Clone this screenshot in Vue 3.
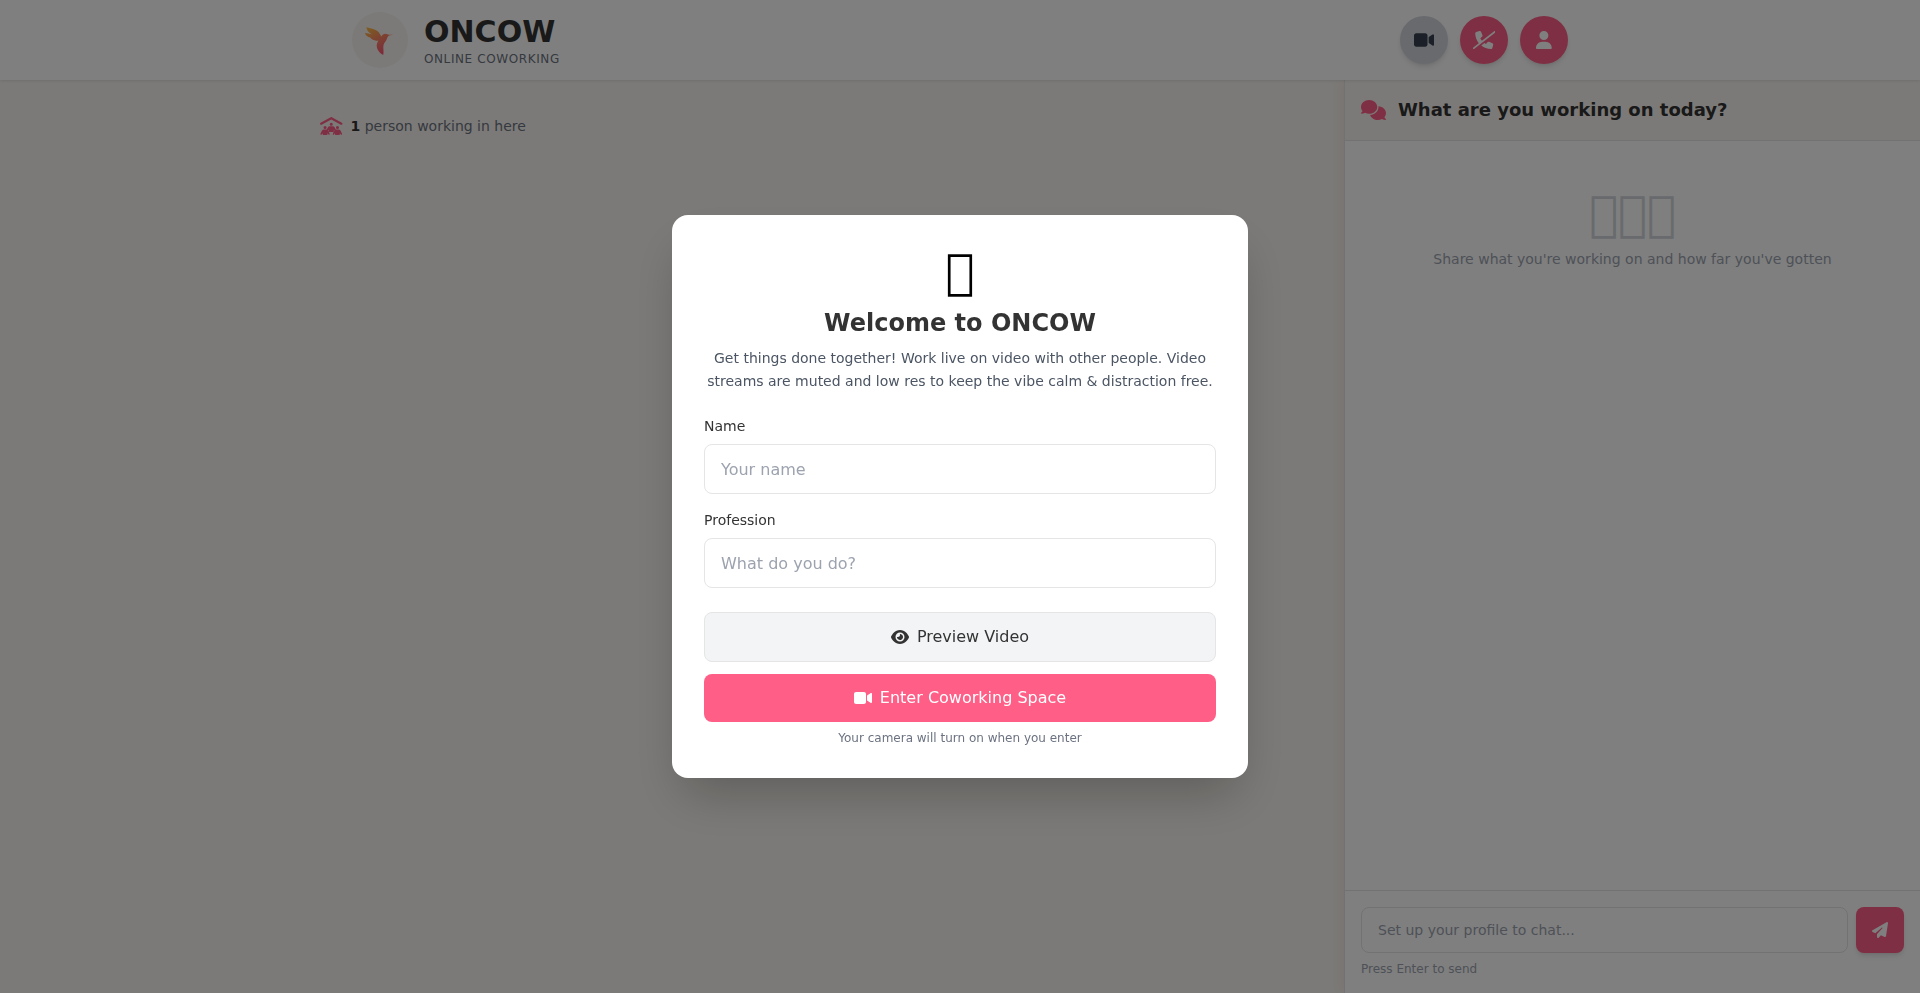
<script setup>
import { ref } from 'vue'

const name = ref('')
const profession = ref('')
const message = ref('')

// Private-use code point, drawn as a plain empty box
const box = String.fromCodePoint(0xf0000)

const icons = {
  video: { box: '0 0 576 512', d: 'M0 128C0 92.7 28.7 64 64 64H320c35.3 0 64 28.7 64 64V384c0 35.3-28.7 64-64 64H64c-35.3 0-64-28.7-64-64V128zM559.1 99.8c10.4 5.6 16.9 16.4 16.9 28.2V384c0 11.8-6.5 22.6-16.9 28.2s-23 5-32.9-1.6l-96-64L416 337.1V320 192 174.9l14.2-9.5 96-64c9.8-6.5 22.4-7.2 32.9-1.6z' },
  phoneSlash: { box: '0 0 640 512', d: 'M228.9 24.6c-7.7-18.6-28-28.5-47.4-23.2l-88 24C76.1 30.2 64 46 64 64c0 107.4 37.8 206 100.8 283.1L9.2 469.1c-10.4 8.2-12.3 23.3-4.1 33.7s23.3 12.3 33.7 4.1l592-464c10.4-8.2 12.3-23.3 4.1-33.7s-23.3-12.3-33.7-4.1L253 278c-17.8-21.5-32.9-45.2-45-70.7L257.3 167c13.7-11.2 18.4-30 11.6-46.3l-40-96zm96.8 319l-91.3 72C310.7 476 407.1 512 512 512c18 0 33.8-12.1 38.6-29.5l24-88c5.3-19.4-4.6-39.7-23.2-47.4l-96-40c-16.3-6.8-35.2-2.1-46.3 11.6L368.7 368c-15-7.1-29.3-15.2-43-24.3z' },
  user: { box: '0 0 448 512', d: 'M224 256A128 128 0 1 0 224 0a128 128 0 1 0 0 256zm-45.7 48C79.8 304 0 383.8 0 482.3C0 498.7 13.3 512 29.7 512H418.3c16.4 0 29.7-13.3 29.7-29.7C448 383.8 368.2 304 269.7 304H178.3z' },
  comments: { box: '0 0 640 512', d: 'M208 352c114.9 0 208-78.8 208-176S322.9 0 208 0S0 78.8 0 176c0 38.6 14.7 74.3 39.6 103.4c-3.5 9.4-8.7 17.7-14.2 24.7c-4.8 6.2-9.7 11-13.3 14.3c-1.8 1.6-3.3 2.9-4.3 3.7c-.5 .4-.9 .7-1.1 .8l-.2 .2C1 327.2-1.4 334.4 .8 340.9S9.1 352 16 352c21.8 0 43.8-5.6 62.1-12.5c9.2-3.5 17.8-7.4 25.3-11.4C134.1 343.3 169.8 352 208 352zM448 176c0 112.3-99.1 196.9-216.5 207C255.8 457.4 336.4 512 432 512c38.2 0 73.9-8.7 104.7-23.9c7.5 4 16 7.9 25.2 11.4c18.3 6.9 40.3 12.5 62.1 12.5c6.9 0 13.1-4.5 15.2-11.1c2.1-6.6-.2-13.8-5.8-17.9l-.2-.2c-.2-.2-.6-.4-1.1-.8c-1-.8-2.5-2-4.3-3.7c-3.6-3.3-8.5-8.1-13.3-14.3c-5.5-7-10.7-15.4-14.2-24.7c24.9-29 39.6-64.7 39.6-103.4c0-92.8-84.9-168.9-192.6-175.5c.4 5.1 .6 10.3 .6 15.5z' },
  plane: { box: '0 0 512 512', d: 'M498.1 5.6c10.1 7 15.4 19.1 13.5 31.2l-64 416c-1.5 9.7-7.4 18.2-16 23s-18.9 5.4-28 1.6L284 427.7l-68.5 74.1c-8.9 9.7-22.9 12.9-35.2 8.1S160 493.2 160 480V396.4c0-4 1.5-7.8 4.2-10.7L331.8 202.8c5.8-6.3 5.6-16-.4-22s-15.7-6.4-22-.7L106 360.8 17.7 316.6C7.1 311.3 .3 300.7 0 288.9s5.9-22.8 16.1-28.7l448-256c10.7-6.1 23.9-5.5 34 1.4z' },
  eye: { box: '0 0 576 512', d: 'M288 32c-80.8 0-145.5 36.8-192.6 80.6C48.6 156 17.3 208 2.5 243.7c-3.3 7.9-3.3 16.7 0 24.6C17.3 304 48.6 356 95.4 399.4C142.5 443.2 207.2 480 288 480s145.5-36.8 192.6-80.6c46.8-43.5 78.1-95.4 93-131.1c3.3-7.9 3.3-16.7 0-24.6c-14.9-35.7-46.2-87.7-93-131.1C433.5 68.8 368.8 32 288 32zM144 256a144 144 0 1 1 288 0 144 144 0 1 1 -288 0zm144-64c0 35.3-28.7 64-64 64c-7.1 0-13.9-1.2-20.3-3.3c-5.5-1.8-11.9 1.6-11.7 7.4c.3 6.9 1.3 13.8 3.2 20.7c13.7 51.2 66.4 81.6 117.6 67.9s81.6-66.4 67.9-117.6c-11.1-41.5-47.8-69.4-88.6-71.1c-5.8-.2-9.2 6.1-7.4 11.7c2.1 6.4 3.3 13.2 3.3 20.3z' },
  peopleRoof: { box: '0 0 640 512', d: 'M335.5 4l288 160c15.4 8.6 21 28.1 12.4 43.5s-28.1 21-43.5 12.4L320 68.6 47.5 220c-15.4 8.6-34.9 3-43.5-12.4s-3-34.9 12.4-43.5L304.5 4c9.7-5.4 21.4-5.4 31.1 0zM320 160a44 44 0 1 1 0 88 44 44 0 1 1 0-88zM144 256a44 44 0 1 1 0 88 44 44 0 1 1 0-88zM496 256a44 44 0 1 1 0 88 44 44 0 1 1 0-88zM284 262h72c27 0 50 14 63 37l40 76c7 14 2 28-9 33s-25 1-32-10l-24-42v50c0 12-8 20-20 20H266c-12 0-20-8-20-20v-50l-24 42c-7 11-21 15-32 10s-16-19-9-33l40-76c13-23 36-37 63-37zM112 358h64c27 0 46 12 59 35l38 76c7 14 2 28-9 33s-25 1-32-10l-18-34v34c0 12-8 20-20 20H94c-12 0-20-8-20-20v-34l-18 34c-7 11-21 15-32 10s-16-19-9-33l38-76c13-23 32-35 59-35zM464 358h64c27 0 46 12 59 35l38 76c7 14 2 28-9 33s-25 1-32-10l-18-34v34c0 12-8 20-20 20H446c-12 0-20-8-20-20v-34l-18 34c-7 11-21 15-32 10s-16-19-9-33l38-76c13-23 32-35 59-35z' }
}
</script>

<template>
  <div class="page">
    <header class="topbar">
      <div class="topbar-inner">
        <div class="brand">
          <span class="logo">
            <svg viewBox="0 0 56 56" aria-hidden="true">
              <defs>
                <linearGradient id="bird" x1="15" y1="14" x2="31" y2="43" gradientUnits="userSpaceOnUse">
                  <stop offset="0" stop-color="#fbc03f" />
                  <stop offset="0.5" stop-color="#fb8562" />
                  <stop offset="1" stop-color="#fb5078" />
                </linearGradient>
              </defs>
              <path fill="url(#bird)" d="M14.5 14.9C16.4 16 22.2 16.6 25.4 19C27.4 20.6 28.4 22.6 29.2 24.6C30 22.8 31.8 21.6 33.6 21.7C35 21.8 35.8 22.3 36.8 22.7L41.4 22.8L37 23.6C35.8 24.4 35.2 26 34.6 27.6C33.8 29.6 32 31 31.5 33.2C30.8 36.2 32.2 39.4 31.2 42.9C28 41.4 24.8 38 24.7 33.8C24.6 31.6 25.6 30 26.4 28.4C22.8 29.2 20 28 18.2 25.6C16 25 13.4 23.6 13 20.7C15.2 21.6 18 21.4 20.4 22.6C17.6 20.8 14.6 18.8 14.5 14.9Z" />
            </svg>
          </span>
          <div>
            <h1>ONCOW</h1>
            <p class="tagline">Online Coworking</p>
          </div>
        </div>
        <nav class="actions" aria-label="Session">
          <button class="round muted" type="button" aria-label="Toggle camera">
            <svg class="i18" :viewBox="icons.video.box"><path :d="icons.video.d" /></svg>
          </button>
          <button class="round" type="button" aria-label="Leave">
            <svg class="i18" :viewBox="icons.phoneSlash.box"><path :d="icons.phoneSlash.d" /></svg>
          </button>
          <button class="round" type="button" aria-label="Profile">
            <svg class="i18" :viewBox="icons.user.box"><path :d="icons.user.d" /></svg>
          </button>
        </nav>
      </div>
    </header>

    <div class="columns">
      <main class="space">
        <p class="count">
          <svg class="i18 pink" :viewBox="icons.peopleRoof.box"><path :d="icons.peopleRoof.d" /></svg>
          <span><strong>1</strong> person working in here</span>
        </p>
      </main>

      <aside class="chat">
        <div class="chat-head">
          <svg class="i20 pink" :viewBox="icons.comments.box"><path :d="icons.comments.d" /></svg>
          <h2>What are you working on today?</h2>
        </div>
        <div class="chat-empty">
          <p class="glyphs" aria-hidden="true">{{ box.repeat(3) }}</p>
          <p>Share what you're working on and how far you've gotten</p>
        </div>
        <form class="chat-form" @submit.prevent>
          <div class="chat-row">
            <input v-model="message" type="text" aria-label="Message" placeholder="Set up your profile to chat..." />
            <button type="submit" class="send" aria-label="Send">
              <svg class="i16" :viewBox="icons.plane.box"><path :d="icons.plane.d" /></svg>
            </button>
          </div>
          <p class="hint">Press Enter to send</p>
        </form>
      </aside>
    </div>

    <div class="overlay">
      <form class="modal" role="dialog" aria-labelledby="welcome" @submit.prevent>
        <p class="wave" aria-hidden="true">{{ box }}</p>
        <h2 id="welcome">Welcome to ONCOW</h2>
        <p class="intro">Get things done together! Work live on video with other people. Video streams are muted and low res to keep the vibe calm &amp; distraction free.</p>
        <div class="fields">
          <div class="field">
            <label for="name">Name</label>
            <input id="name" v-model="name" type="text" placeholder="Your name" />
          </div>
          <div class="field">
            <label for="profession">Profession</label>
            <input id="profession" v-model="profession" type="text" placeholder="What do you do?" />
          </div>
        </div>
        <div class="buttons">
          <button type="button" class="preview">
            <svg class="i16" :viewBox="icons.eye.box"><path :d="icons.eye.d" /></svg>
            Preview Video
          </button>
          <button type="submit" class="enter">
            <svg class="i16" :viewBox="icons.video.box"><path :d="icons.video.d" /></svg>
            Enter Coworking Space
          </button>
        </div>
        <p class="note">Your camera will turn on when you enter</p>
      </form>
    </div>
  </div>
</template>

<style>
body {
  margin: 0;
  background: #f9f5f0;
}
</style>

<style scoped>
.page {
  min-height: 100vh;
  display: flex;
  flex-direction: column;
  font-family: "DejaVu Sans", sans-serif;
  font-size: 14px;
  line-height: 20px;
  color: #333;
  background: #f9f5f0;
}
.page *,
.page *::before {
  box-sizing: border-box;
}
h1, h2, p {
  margin: 0;
}
button, input {
  font: inherit;
}
button {
  cursor: pointer;
  border: 0;
  padding: 0;
}
svg {
  fill: currentColor;
  flex: none;
}
.i16 { height: 16px; }
.i18 { height: 18px; }
.i20 { height: 20px; }
.pink { color: #ff5e87; }

.topbar {
  position: relative;
  z-index: 1;
  background: #fff;
  box-shadow: 0 1px 3px rgba(0, 0, 0, 0.1);
}
.topbar-inner {
  max-width: 1280px;
  margin: 0 auto;
  padding: 12px 32px;
  display: flex;
  align-items: center;
  justify-content: space-between;
}
.brand {
  display: flex;
  align-items: center;
  gap: 16px;
}
.logo {
  width: 56px;
  height: 56px;
  border-radius: 50%;
  background: #f9f5f0;
}
.logo svg {
  display: block;
}
h1 {
  font-size: 30px;
  line-height: 38px;
  font-weight: 700;
}
.tagline {
  font-size: 12px;
  line-height: 16px;
  letter-spacing: 0.05em;
  text-transform: uppercase;
  color: #6b7280;
}
.actions {
  display: flex;
  gap: 12px;
}
.round {
  width: 48px;
  height: 48px;
  border-radius: 50%;
  display: flex;
  align-items: center;
  justify-content: center;
  color: #fff;
  background: #ff5e87;
  box-shadow: 0 4px 6px -1px rgba(0, 0, 0, 0.1), 0 2px 4px -2px rgba(0, 0, 0, 0.1);
}
.round.muted {
  color: #374151;
  background: #d1d5db;
}

.columns {
  flex: 1;
  display: flex;
}
.space {
  flex: 1;
  padding: 32px 32px 32px max(32px, calc(50vw - 640px));
}
.count {
  display: flex;
  align-items: center;
  gap: 8px;
  height: 28px;
  color: #6b7280;
}
.count strong {
  color: #333;
}
.chat {
  flex: none;
  width: 30%;
  display: flex;
  flex-direction: column;
  background: #fff;
  border-left: 1px solid #e5e5e5;
  box-shadow: -4px 0 12px rgba(80, 20, 40, 0.06);
}
.chat-head {
  display: flex;
  align-items: center;
  gap: 12px;
  padding: 16px;
  background: #f9f5f0;
  border-bottom: 1px solid #e5e5e5;
}
.chat-head h2 {
  font-size: 18px;
  line-height: 28px;
  font-weight: 700;
}
.chat-empty {
  flex: 1;
  padding: 48px 16px;
  text-align: center;
  color: #9ca3af;
}
.glyphs {
  font-size: 48px;
  line-height: 48px;
  margin-bottom: 12px;
  color: #d1d5db;
}
.chat-form {
  padding: 16px;
  border-top: 1px solid #e5e5e5;
}
.chat-row {
  display: flex;
  gap: 8px;
}
input {
  width: 100%;
  min-width: 0;
  padding: 12px 16px;
  color: #333;
  background: #fff;
  border: 1px solid #e5e5e5;
  border-radius: 8px;
  outline: 0;
}
input::placeholder {
  color: #9ca3af;
  opacity: 1;
}
.chat-row input {
  flex: 1;
  height: 46px;
}
.send {
  width: 48px;
  display: flex;
  align-items: center;
  justify-content: center;
  border-radius: 8px;
  color: #fff;
  background: #ff5e87;
  box-shadow: 0 4px 6px -1px rgba(0, 0, 0, 0.1), 0 2px 4px -2px rgba(0, 0, 0, 0.1);
}
.hint {
  margin-top: 8px;
  font-size: 12px;
  line-height: 16px;
  color: #9ca3af;
}

.overlay {
  position: fixed;
  inset: 0;
  z-index: 2;
  display: flex;
  align-items: center;
  justify-content: center;
  background: rgba(0, 0, 0, 0.5);
}
.modal {
  width: 100%;
  max-width: 576px;
  padding: 32px;
  background: #fff;
  border-radius: 16px;
  box-shadow: 0 25px 50px -12px rgba(0, 0, 0, 0.25);
}
.wave {
  font-size: 48px;
  line-height: 48px;
  margin-bottom: 12px;
  text-align: center;
  color: #000;
}
.modal h2 {
  font-size: 24px;
  line-height: 32px;
  font-weight: 700;
  text-align: center;
}
.intro {
  margin: 8px 0 24px;
  line-height: 1.625;
  text-align: center;
  color: #4b5563;
}
.fields {
  display: grid;
  gap: 16px;
}
.field label {
  display: block;
  margin-bottom: 8px;
}
.field input {
  display: block;
  height: 50px;
  font-size: 16px;
  line-height: 24px;
}
.buttons {
  display: grid;
  gap: 12px;
  margin: 24px 0 8px;
}
.buttons button {
  display: flex;
  align-items: center;
  justify-content: center;
  gap: 8px;
  padding: 12px 16px;
  border-radius: 8px;
  font-size: 16px;
  line-height: 24px;
}
.buttons .preview {
  color: #333;
  background: #f3f4f6;
  border: 1px solid #e5e5e5;
}
.buttons .enter {
  color: #fff;
  background: #ff5e87;
}
.note {
  font-size: 12px;
  line-height: 16px;
  text-align: center;
  color: #6b7280;
}
</style>
